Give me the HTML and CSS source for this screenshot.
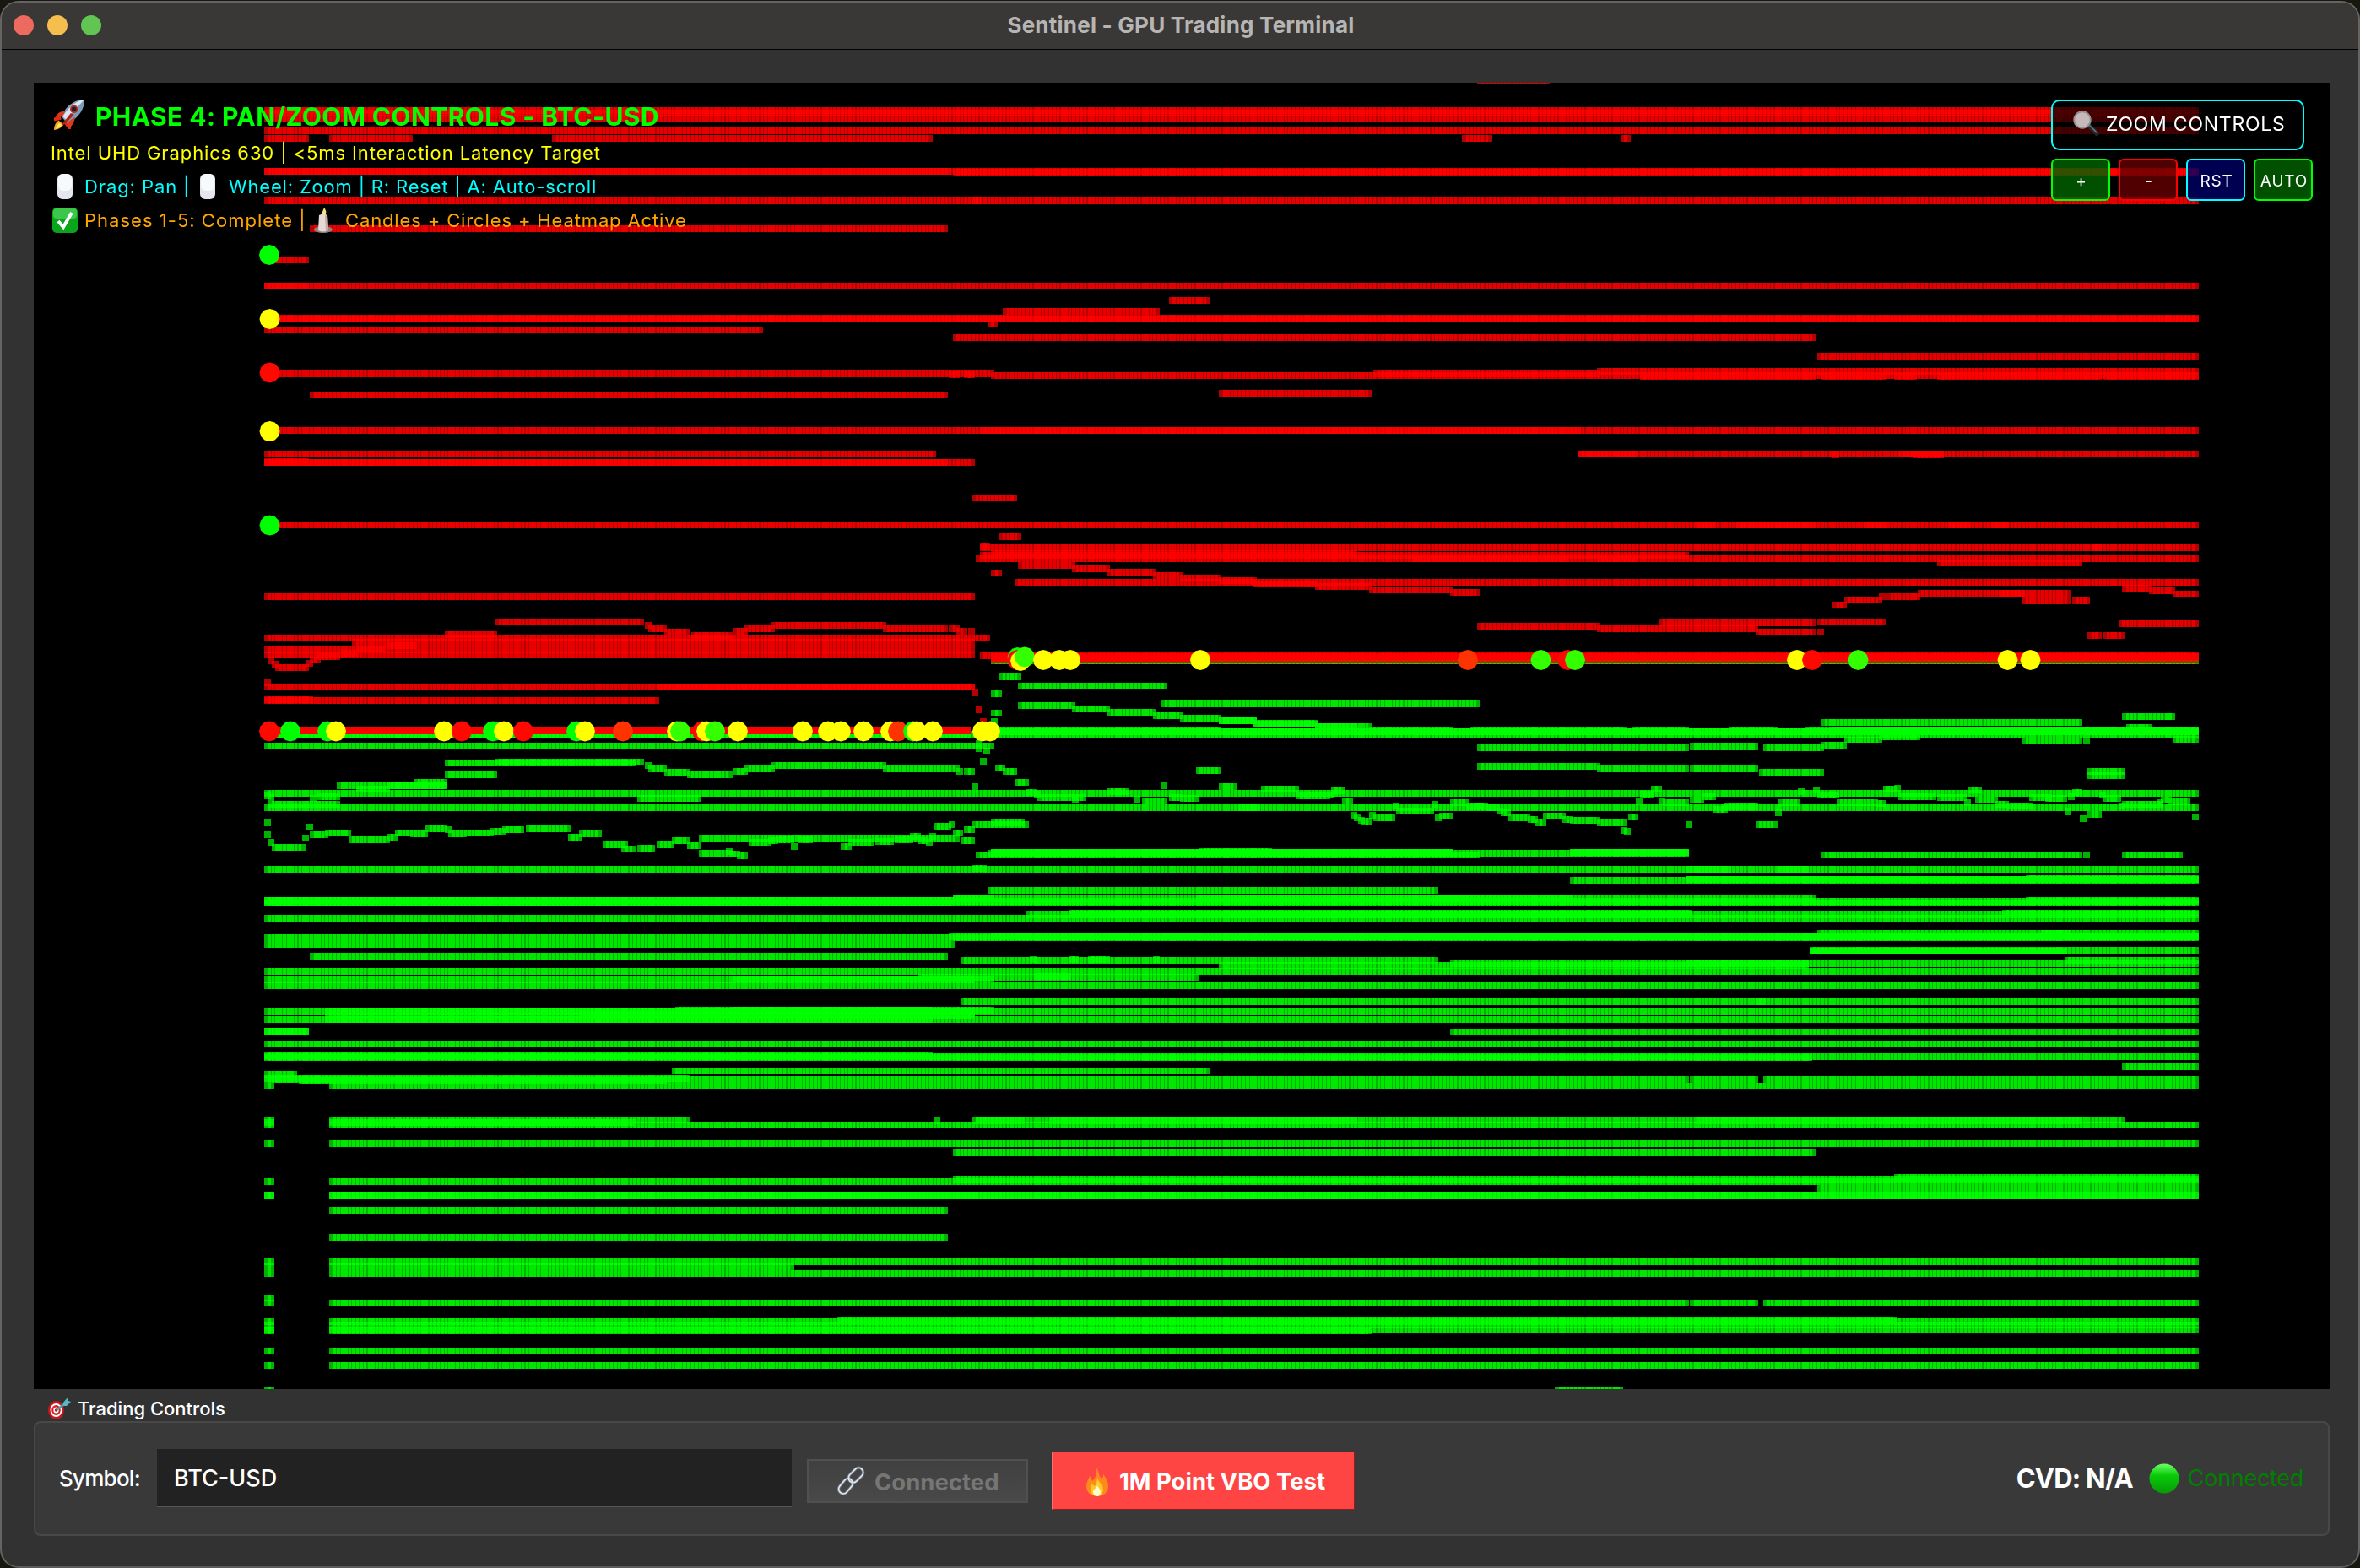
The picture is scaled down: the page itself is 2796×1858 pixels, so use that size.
FILE: index.html
```html
<!DOCTYPE html>
<html lang="en">
<head>
<meta charset="utf-8">
<title>Sentinel - GPU Trading Terminal</title>
<link rel="stylesheet" href="styles.css">
</head>
<body>
<div class="window">
  <header class="titlebar">
    <div class="lights"><i class="light close"></i><i class="light min"></i><i class="light max"></i></div>
    <h1 class="title">Sentinel - GPU Trading Terminal</h1>
  </header>
  <main class="content">
    <section class="chart">
      <canvas id="heatmap" class="heatmap" width="2720" height="1548"></canvas>
      <div class="info">
        <div class="line headline">
          <svg class="ic-rocket" viewBox="0 0 40 40"><path d="M9 19 1 24v4l9-2zM23 29l-1 9h-3l-6-8z" fill="#e02a12"/><path d="M7 27c-4 2-6 7-6 12 5-1 10-3 12-7z" fill="#f8a31c"/><path d="M8 30c-3 2-4 5-5 8 3-1 6-2 8-5z" fill="#ffe85c"/><path d="M39 1C28 1 17 7 10 22l8 9C32 24 39 13 39 1z" fill="#7d9cba"/><path d="M39 1C30 2 20 9 12 22l4 4C25 16 32 8 39 1z" fill="#dbe7f2"/><path d="M16 15c-6 0-11 3-13 8l8-1zM27 23c0 6-3 11-8 14l-1-8z" fill="#d93a1e"/><path d="M22 18 10 33l4-1 12-12z" fill="#b02418"/><circle cx="26" cy="13" r="5" fill="#b5301f"/><circle cx="26" cy="13" r="3" fill="#1b2230"/></svg>
          <span class="t1">PHASE 4: PAN/ZOOM CONTROLS - BTC-USD</span>
        </div>
        <div class="line latency"><span class="t2">Intel UHD Graphics 630 | &lt;5ms Interaction Latency Target</span></div>
        <div class="line hints">
          <svg class="ic-mouse" viewBox="0 0 18 30"><rect width="18" height="30" rx="6" fill="#e4e7ec"/><rect x="1" width="16" height="20" rx="6" fill="#f8f9fb"/></svg>
          <span class="t3">Drag: Pan |</span>
          <svg class="ic-mouse second" viewBox="0 0 18 30"><rect width="18" height="30" rx="6" fill="#e4e7ec"/><rect x="1" width="16" height="20" rx="6" fill="#f8f9fb"/></svg>
          <span class="t4">Wheel: Zoom | R: Reset | A: Auto-scroll</span>
        </div>
        <div class="line phases">
          <svg class="ic-check" viewBox="0 0 30 30"><rect width="30" height="30" rx="5" fill="#0aa51c"/><rect x="1" y="1" width="28" height="12" rx="4" fill="#3cc64a"/><path d="m7 16 6 7 10-17" fill="none" stroke="#fff" stroke-width="4"/></svg>
          <span class="t5">Phases 1-5: Complete |</span>
          <svg class="ic-candle" viewBox="0 0 22 30"><ellipse cx="11" cy="26" rx="11" ry="4" fill="#8f8580"/><path d="M6 9q5-3 10 0l1 18q-6 3-12 0z" fill="#e7dad5"/><path d="M13 9l3 1 1 17-3 1z" fill="#bfaaa5"/><path d="M12 0q4 5 1 8-4 0-3-3z" fill="#ffdf7c"/></svg>
          <span class="t6">Candles + Circles + Heatmap Active</span>
        </div>
      </div>
      <div class="zoom">
        <div class="zoom-title">
          <svg class="ic-lens" viewBox="0 0 30 30"><path d="m19 18 9 9" stroke="#23282c" stroke-width="5.5" stroke-linecap="round"/><path d="m20 18 8 8" stroke="#747c82" stroke-width="1.5" stroke-linecap="round"/><circle cx="11" cy="11" r="9.7" fill="#c9b8b8" stroke="#8d9295" stroke-width="2"/></svg>
          <span>ZOOM CONTROLS</span>
        </div>
        <div class="zoom-buttons">
          <button class="zb green">+</button><button class="zb red">-</button><button class="zb blue">RST</button><button class="zb green">AUTO</button>
        </div>
      </div>
    </section>
    <section class="controls">
      <h2 class="legend">
        <svg class="ic-target" viewBox="0 0 27 26"><ellipse cx="9.5" cy="15" rx="9.5" ry="11" fill="#c8161d"/><ellipse cx="9.5" cy="15" rx="7" ry="8" fill="#fff"/><ellipse cx="9.5" cy="15" rx="5.3" ry="6" fill="#d3222a"/><ellipse cx="9.5" cy="15" rx="3.2" ry="3.6" fill="#fff"/><circle cx="9.5" cy="15" r="1.7" fill="#c8161d"/><path d="m10 15 10-8" stroke="#3ea9b0" stroke-width="2.6"/><path d="m18 6 5-6 1 4 3 1-5 5-4 0z" fill="#58b8bd"/></svg>
        <span>Trading Controls</span>
      </h2>
      <div class="panel">
        <label class="symbol" for="symbol">Symbol:</label>
        <input class="field" id="symbol" value="BTC-USD">
        <button class="btn connect" disabled>
          <svg class="ic-link" viewBox="0 0 36 36"><g fill="none" stroke="#6f7986" stroke-width="3.4"><rect x="-5.5" y="-10" width="11" height="20" rx="5.5" transform="translate(24 11) rotate(45)"/><rect x="-5.5" y="-10" width="11" height="20" rx="5.5" transform="translate(12 24) rotate(40)"/></g><g fill="none" stroke="#e3e9f0" stroke-width="1.6"><rect x="-5.5" y="-10" width="11" height="20" rx="5.5" transform="translate(24 11) rotate(45)"/><rect x="-5.5" y="-10" width="11" height="20" rx="5.5" transform="translate(12 24) rotate(40)"/></g></svg>
          <span>Connected</span>
        </button>
        <button class="btn vbo">
          <svg class="ic-fire" viewBox="0 0 26 34"><path d="M12 0c4 6 2 9 6 13 2-1 2-3 2-5 4 5 6 9 6 14 0 7-5 12-13 12S0 29 0 22c0-5 3-8 4-12 2 2 2 4 3 6 4-4 6-9 5-16z" fill="#ff8a1c"/><path d="M13 11c0 6 7 8 7 15 0 5-3 8-7 8s-8-3-8-8c0-3 1-5 2-7 1 2 2 2 3 3 2-3 3-6 3-11z" fill="#ffca28"/><path d="M13 21c2 4 4 5 4 8s-2 5-4 5-5-2-5-5 3-3 5-8z" fill="#fffbd0"/></svg>
          <span>1M Point VBO Test</span>
        </button>
        <div class="status">
          <strong class="cvd">CVD: N/A</strong>
          <svg class="ic-dot" viewBox="0 0 36 36"><defs><linearGradient id="dot" x2="0" y2="1"><stop stop-color="#6dff66"/><stop offset=".4" stop-color="#08c908"/><stop offset="1" stop-color="#089a08"/></linearGradient></defs><circle cx="18" cy="18" r="17.5" fill="url(#dot)"/></svg>
          <span class="state">Connected</span>
        </div>
      </div>
    </section>
  </main>
</div>
<script src="heatmap.js"></script>
</body>
</html>
```
FILE: styles.css
```css
* { box-sizing: border-box; }
body { margin: 0; width: 2796px; height: 1858px; overflow: hidden; background: #17180f; font-family: Inter, "Liberation Sans", sans-serif; }
svg { display: block; flex: none; overflow: visible; }
button, input { font-family: inherit; }

.window { display: flex; flex-direction: column; width: 2796px; height: 1857px; margin-top: 1px; border: 2px solid #656463; border-bottom-color: #5b5b5b; border-radius: 22px; background: #323232; overflow: hidden; }
.titlebar { position: relative; flex: none; height: 56px; border-bottom: 1px solid #000; background: #3a3836; display: flex; align-items: center; justify-content: center; }
.lights { position: absolute; left: 14px; top: 15px; display: flex; gap: 16px; }
.light { width: 24px; height: 24px; border-radius: 50%; }
.close { background: #ed6a5e; }
.min { background: #f5bf4f; }
.max { background: #61c554; }
.title { margin: -2px 0 0 2px; font-size: 26px; font-weight: 700; color: #b6b5b4; letter-spacing: .23px; }

.content { display: flex; flex-direction: column; padding: 39px 34px 0 38px; }
.chart { position: relative; width: 2720px; height: 1548px; background: #000; }
.heatmap { display: block; }

.info { position: absolute; left: 20px; top: 15px; }
.line { display: flex; align-items: center; height: 40px; white-space: pre; font-size: 22px; letter-spacing: .9px; }
.line span { margin-top: -1px; }
.headline { height: 48px; color: #0f0; font-size: 30px; font-weight: 700; letter-spacing: .42px; }
.headline .t1 { margin-top: 1px; }
.latency { color: #ff0; }
.hints { color: #0ff; }
.phases { color: #ffa500; }
.ic-rocket { width: 40px; height: 38px; margin: -2px 11px 0 2px; }
.ic-mouse { width: 18px; height: 30px; margin: 0 14px 0 8px; }
.ic-mouse.second { margin: 0 16px; }
.ic-check { width: 30px; height: 30px; margin: 0 8px 0 2px; }
.ic-candle { width: 22px; height: 30px; margin: 0 15px 0 12px; }
.line .t3 { width: 121px; }
.line .t4 { letter-spacing: .82px; }
.line .t5 { width: 260px; letter-spacing: 1.02px; }
.line .t6 { letter-spacing: .86px; }

.zoom { position: absolute; left: 2390px; top: 20px; display: flex; flex-direction: column; gap: 10px; color: #fff; }
.zoom-title { display: flex; align-items: center; width: 300px; height: 60px; padding-left: 24px; border: 2px solid #0ff; border-radius: 10px; background: rgba(0, 0, 0, .7); font-size: 23px; }
.ic-lens { width: 30px; height: 30px; margin: -4px 9px 0 0; }
.zoom-title span { margin-top: -3px; letter-spacing: .75px; }
.zoom-buttons { display: flex; gap: 10px; }
.zb { width: 70px; height: 50px; padding: 2px 0 0 2px; border: 2px solid; border-radius: 6px; color: #fff; font-size: 19px; letter-spacing: .8px; }
.zb.green { background: rgba(0, 100, 0, .8); border-color: #0f0; }
.zb.red { background: rgba(100, 0, 0, .8); border-color: #f00; }
.zb.blue { background: rgba(0, 0, 100, .8); border-color: #0ff; }

.controls { display: flex; flex-direction: column; }
.legend { display: flex; align-items: center; height: 38px; margin: 0; padding: 8px 0 0 17px; color: #fff; font-size: 22px; font-weight: 500; }
.ic-target { width: 27px; height: 26px; margin-right: 8px; }
.panel { display: flex; align-items: center; width: 2720px; height: 136px; padding: 0 29px 0 28px; border: 2px solid #484848; border-radius: 8px; background: #393939; }
.symbol { width: 116px; margin-top: -2px; color: #fff; font-size: 26px; font-weight: 500; letter-spacing: -.75px; }
.field { width: 752px; height: 69px; margin: -2px 0 0; padding: 2px 20px 0; border: 0; border-bottom: 2px solid #555; background: #222; color: #fff; font-size: 27px; font-weight: 500; outline: 0; }
.btn { display: flex; align-items: center; padding: 0; font-size: 27.5px; font-weight: 700; }
.connect { width: 262px; height: 52px; margin: 6px 0 0 18px; padding-left: 32px; border: 2px solid #505050; background: linear-gradient(#404040, #494949); color: #767676; }
.ic-link { width: 36px; height: 36px; margin-right: 10px; }
.vbo { width: 359px; height: 69px; margin: 5px 0 0 28px; padding-left: 39px; border: 1px solid; border-color: #ff6a6a #8c2020 #8c2020 #ff6a6a; background: #f44; color: #fff; }
.vbo span, .connect span { margin-top: 1px; }
.ic-fire { width: 26px; height: 34px; margin: 3px 13px 0 1px; }
.status { display: flex; align-items: center; margin: -1px 0 0 auto; color: #fff; }
.cvd { font-size: 31px; letter-spacing: -.75px; }
.ic-dot { width: 36px; height: 36px; margin: 0 10px 0 19px; }
.state { color: #008000; font-size: 27px; letter-spacing: -.3px; }
```
FILE: heatmap.js
```js
// Order-book heatmap: every level is a run of 8x8 translucent cells, one per time slice.
const ORIGIN_X = 40, ORIGIN_Y = 98;
const FIRST = 313, LAST = 2605, CELL = 8;
// The time scale changes slightly at slice 183.
const KNEE = 183, STEP_A = 4.559, STEP_B = 4.5733, KNEE_X = FIRST + KNEE * STEP_A;
const sliceX = i => Math.floor(i < KNEE ? FIRST + i * STEP_A : KNEE_X + (i - KNEE) * STEP_B);
const sliceAt = x => Math.round(x < KNEE_X ? (x - FIRST) / STEP_A : KNEE + (x - KNEE_X) / STEP_B);

// "y:x0-x1,x0-x1" per level; "F" spans the whole history, "L" is everything after the first gap.
const bids = `
936:F 953:F,1469-1495 1026:F,1999-2051,2109-2143 1025:1152-1169 866:F,313-1152 863:1160-2605,1160-2605 862:1160-1450,1740-1930,1935-2002,2049-2107,2139-2605,2170-2605
779:1174-2605 798:1183-1209 809:1206-1382 818:1174-1187 841:1174-1187 851:1174-1182 830:1378-1753
832:1206-1273 836:1269-1314 840:1310-1368 844:1365-1404 847:1401-1450 850:1446-1490,1446-1490 853:1488-1563 854:1488-1563 857:1559-1626,1559-1608 861:1623-1722
880:313-1178 877:1156-1164 883:1156-1164 886:1165-1173 898:1161-1169 906:1179-1191 910:1188-1205 923:1201-1218 928:1152-1160 935:1215-1228 937:1224-1232 941:1229-1287 944:1269-1277
934:1310-1336 943:1346-1354 945:1351-1382 927:1378-1386 941:1383-1404 942:1401-1422 909:1419-1450 928:1446-1468 931:1496-1540 939:1537-1577 938:1573-1581 933:1578-1595 945:1591-1604
962:1600-1608 965:1605-1613 968:1609-1617 969:1614-1626 962:1623-1631 965:1627-1654 951:1650-1658 957:1655-1699 949:1695-1703 965:1700-1708 963:1704-1722 947:1718-1740 952:1736-1762 951:1745-1758 953:1758-1776
957:1772-1780 959:1777-1789 965:1786-1812 967:1809-1822 971:1818-1831 963:1827-1853 967:1850-1865 968:1863-1898 971:1895-1926 980:1922-1930 981:1926-1934 964:1931-1943 946:1940-1948 937:1945-1962 931:1958-1971
946:1967-1975 947:1971-2002 973:1999-2007 944:2003-2021 940:2017-2034 955:2031-2048 952:2044-2084 973:2081-2107 959:2103-2111 947:2108-2134 934:2130-2138 932:2149-2157 938:2153-2179 947:2176-2224 948:2220-2234
931:2230-2248 930:2244-2252 940:2248-2296 941:2294-2330 947:2325-2337 932:2334-2347 944:2343-2365 949:2363-2383 951:2379-2410 941:2407-2429 942:2425-2451 958:2448-2456 940:2452-2460 935:2457-2469 966:2466-2474 961:2475-2492
938:2488-2496 942:2493-2515 951:2511-2519 949:2516-2562 947:2556-2564 944:2561-2574 946:2570-2596 964:2597-2605
900:526-756 899:585-765 903:763-774 907:771-792 911:789-820 914:816-869 910:867-887 907:884-919 903:916-1051 907:1047-1137 910:1133-1141,1143-1155
914:526-588 923:490-530 927:399-530,460-530 931:422-461 940:377-403 939:313-321 941:317-325 949:317-403 942:367-377,753-833
971:313-321 985:313-321 994:317-325 1000:322-362 989:358-366 976:363-371 985:367-389 983:385-416 991:413-461 988:458-471 983:467-489 984:485-507 978:503-530 979:526-534 984:531-552 983:549-584 981:580-597 979:594-624 978:621-675
988:671-688 984:685-714 997:712-743 1002:739-756 1001:753-779 997:780-801 992:798-820 998:816-833 990:830-1138 1007:830-869 1005:861-869 1008:866-879 1010:875-887 994:889-914 992:908-924 991:920-943 999:938-946 991:946-966 999:998-1010
994:1007-1037 993:1037-1061 991:1061-1084 987:1079-1092 992:1088-1102 994:1097-1105 987:1102-1110 975:1106-1128 973:1124-1132 983:1129-1141 992:1138-1155 979:1143-1155 973:1152-1218 971:1174-1213
1009:1156-1753 1006:1174-1722,1174-1722 1007:1170-2002 1005:1422-1508 1006:1863-2002,1863-2002 1009:2158-2469,2470-2478,2516-2587
1039:1863-2605 1038:1999-2605,1999-2605 1037:2402-2605 1051:1170-1703
845:2516-2578 852:2158-2469 858:2520-2551 882:1750-2002 881:2003-2084 882:2090-2161 879:2158-2188 873:2185-2229 869:2226-2274 874:2398-2469,2470-2478 872:2575-2605
904:1750-1898 907:1895-2002,2003-2084 911:2085-2161 910:2475-2519 915:2475-2519
1066:F,313-1132 1063:313-1132,313-1132,2402-2605 1060:1129-1178,1700-1740 1061:1129-2152,1418-1865 1064:1129-2605 
1084:F 1080:1215-2605,1265-2007 1078:1265-2007,2371-2605
1107:F 1115:313-1132 1106:1124-2605,1200-2605 1105:1174-1223,1274-1291,1310-1336,1378-1427,1469-1481,1487-1495,1505-1608,1609-1617,1623-2002,2230-2605 1102:2153-2605,2420-2455
1122:2144-2605 1123:2144-2451,2144-2451 1134:1138-1703,2448-2605 1133:1220-1228,1265-1277,1288-1314,1365-1373 1140:1446-2143 1138:1718-2605,1999-2143
1129:367-1123 1147:F 1157:313-1155 1156:870-1178 1154:1088-1422 1153:1224-1268 1164:F 1183:1138-2605,2081-2093
1195:F,385-1155 1204:F,385-1105 1193:803-1178,870-1105 1200:385-1155 1198:687-1155
1218:313-366,313-366 1219:1718-2605 1233:F 1247:313-1105 1248:F 1249:313-2147
1265:798-1436 1260:2516-2605 1269:313-353 1274:313-820 1275:313-2002,2003-2084,2090-2605 1276:354-790 1283:313-325,390-2605
1323:313-325,390-819,1156-2519 1326:313-325,390-755,458-730 1329:313-325,390-2605 1324:1106-1114,1152-1213,1242-1608,2012-2469
1351:L 1362:1129-2152 1396:L 1394:1129-2605 1391:2244-2605 1404:2153-2605 1413:L,L 1412:938-1160
1430:390-1123 1462:390-1123 1491:L 1497:313-325,390-942 1505:L 1534:313-325 1540:313-325,390-2001,2003-2084,2090-2605
1562:L 1566:L 1560:992-2247 1572:L 1573:313-325,390-1626 1597:L 1614:L 1644:313-325,1842-1922`;

const asks = `
91:1750-1839 127:F 130:F 136:F 151:F 160:313-366,390-489,657-1105,1732-1767,1922-1934 199:F,313-1129 200:1129-2605 234:F,1153-1165 267:367-1123 304:313-366
335:F,313-366 373:F 374:F 365:1188-1377 380:1170-1182 352:1383-1436 387:313-906 396:1129-2152 418:2153-2605
439:313-1178,1627-1895 440:1124-1137,1143-1155 441:1174-2605 436:1895-2605 442:1941-2152,2158-2234,2244-2270,2294-2492,2493-2605
464:367-1123 462:1446-1626 506:F,1161-1875 534:313-1110,1872-2605,1872-1944,2248-2302 544:313-1155,313-1123 543:313-366 535:2171-2179,2266-2302
586:1152-1205 618:F,2012-2035,2058-2152,2207-2235,2309-2333,2360-2379 632:1183-1209 644:1161-1173 645:1161-2605,2479-2491
652:1174-1608 654:1161-2002 658:1156-2605,1674-1860,1891-1943 666:1206-1272 670:1269-1314 674:1310-1368 678:1365-1404 681:1401-1450 684:1446-1490 688:1487-1563 691:1559-1625 695:1623-1722 698:1718-1753
686:1201-2605 675:1174-1187 703:313-1155
733:585-765 737:763-774 741:771-792 745:789-820 749:817-869 744:867-887 741:884-919 737:916-1051 741:1047-1123,1124-1136 744:1134-1147,1147-1155
748:526-588 752:313-1173 757:417-1155 761:460-492 765:422-460 766:313-1155 772:313-1155
770:403-424 774:377-403 778:367-380 782:363-371 787:326-366 783:321-330 779:317-325
805:313-321 810:313-1155,780-1155 825:313-371 826:313-783 817:1152-1160 837:1156-1164 851:1161-1169
862:313-1152,313-1152,313-1152
773:1161-2605 774:1174-2605,1174-2605 777:1174-1430 778:1174-2605
663:2294-2469 699:2271-2456,2370-2401 703:2235-2274,2226-2234 707:2185-2229 713:2171-2188 708:2398-2456,2457-2478 693:2516-2551 696:2547-2578 700:2575-2605
735:2511-2605 749:2475-2492,2493-2519 738:1750-1898 741:1895-2085 734:1967-2152 745:2081-2152,2153-2161 733:2153-2234`;

const trades = [
  ['g', 319, 302], ['y', 319.5, 378], ['r', 319.5, 441.5], ['y', 319.5, 511], ['g', 319.5, 622.5],
  ...`r319 g344 g388 y398 y526 r547 g584 y597 r620 g683 y693 o738 y802 h806 r832 y837 h847 y874 y951 y981 y996 y1023 y1055 o1064 g1082 y1086 y1105 y1164 y1173`
    .split(' ').map(t => [t[0], +t.slice(1), 866.5]),
  ['g', 1205.5, 779], ['r', 1205.5, 782], ['y', 1209, 783], ['h', 1214, 778.5],
  ...`y1236 y1255 y1268 y1422 o1739 h1825.5 r1857.5 h1866 y2129 r2147 h2201.5 y2378.5 y2405.5`
    .split(' ').map(t => [t[0], +t.slice(1), 782])
];
const tradeColors = { g: '#00ff00', h: '#33ff00', y: '#ffff00', r: '#ff0800', o: '#ff3300' };

const ctx = document.getElementById('heatmap').getContext('2d');
ctx.translate(-ORIGIN_X, -ORIGIN_Y);

function drawLevels(levels, color) {
  ctx.fillStyle = color;
  ctx.globalAlpha = 0.7;
  for (const level of levels.trim().split(/\s+/)) {
    const [y, spans] = level.split(':');
    const expanded = spans.replace(/F/g, FIRST + '-' + LAST).replace(/L/g, '313-325,390-' + LAST);
    for (const span of expanded.split(',')) {
      const [a, b] = span.split('-').map(Number);
      const from = sliceAt(a);
      const to = Math.max(from, sliceAt(b - CELL));
      for (let i = from; i <= to; i++) {
        ctx.fillRect(sliceX(i), +y, CELL, CELL);
      }
    }
  }
  ctx.globalAlpha = 1;
}

// Trade markers are twelve-sided.
function drawTrade(kind, x, y) {
  ctx.fillStyle = tradeColors[kind];
  ctx.beginPath();
  for (let k = 0; k < 12; k++) {
    const a = k * Math.PI / 6;
    ctx.lineTo(x + 12 * Math.cos(a), y + 12 * Math.sin(a));
  }
  ctx.fill();
}

drawLevels(bids, '#00ff00');
drawLevels(asks, '#ff0000');
for (const [kind, x, y] of trades) drawTrade(kind, x, y);
```
